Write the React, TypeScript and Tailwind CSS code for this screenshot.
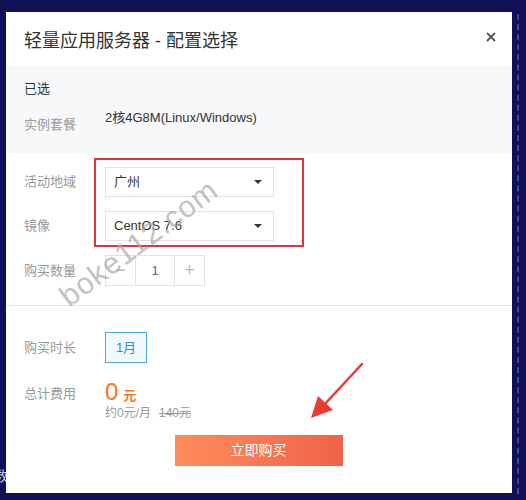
import React from "react";

const Caret = () => (
  <svg width="8" height="4" viewBox="0 0 8 4" className="block">
    <path d="M0 0 L8 0 L4 4 Z" fill="#333" />
  </svg>
);

export default function App() {
  const font = { fontFamily: '"Liberation Sans", Arial, "Noto Sans CJK SC", sans-serif' };
  return (
    <div
      className="relative w-[526px] h-[500px] overflow-hidden bg-[#110f55] pt-[12px] pl-[6px]"
      style={font}
    >
      {/* right dashed strip */}
      <div className="absolute left-[517px] top-[14px] h-[480px] border-l-2 border-dashed border-[#3a4a9a]" />
      {/* background text peeking at left */}
      <div className="absolute left-[-6px] top-[466px] text-[14px] text-[#c9cce8]">数</div>

      <div className="relative w-[506px] h-[481px] bg-white flex flex-col">
        {/* header */}
        <div className="h-[54px] flex items-center justify-between pl-[18px] pr-[16px] pt-[4px]">
          <div className="text-[18px] text-[#333]">轻量应用服务器 - 配置选择</div>
          <svg width="10" height="10" viewBox="0 0 10 10" className="mt-[-8px]">
            <path d="M1 1 L9 9 M9 1 L1 9" stroke="#555" strokeWidth="1.8" />
          </svg>
        </div>

        {/* selected section */}
        <div className="h-[87px] bg-[#f7f8fa] px-[18px] pt-[14px]">
          <div className="text-[13px] text-[#333] leading-[18px]">已选</div>
          <div className="flex mt-[11px]">
            <div className="w-[81px] text-[13px] text-[#999] leading-[18px] mt-[7px]">实例套餐</div>
            <div className="text-[13px] text-[#333] leading-[18px]">2核4G8M(Linux/Windows)</div>
          </div>
        </div>

        {/* config section */}
        <div className="h-[153px] px-[18px] pt-[14px] border-b border-[#e5e5e5]">
          <div className="flex items-center h-[30px]">
            <div className="w-[81px] text-[13px] text-[#999]">活动地域</div>
            <div className="w-[169px] h-[30px] border border-[#e2e2e2] flex items-center justify-between pl-[8px] pr-[11px] text-[13px] text-[#333]">
              <span>广州</span>
              <Caret />
            </div>
          </div>
          <div className="flex items-center h-[30px] mt-[14px]">
            <div className="w-[81px] text-[13px] text-[#999]">镜像</div>
            <div className="w-[169px] h-[30px] border border-[#e2e2e2] flex items-center justify-between pl-[8px] pr-[11px] text-[13px] text-[#333]">
              <span>CentOS 7.6</span>
              <Caret />
            </div>
          </div>
          <div className="flex items-center h-[31px] mt-[14px]">
            <div className="w-[81px] text-[13px] text-[#999]">购买数量</div>
            <div className="flex h-[31px] border border-[#e2e2e2] text-[#bbb]">
              <div className="w-[30px] flex items-center justify-center border-r border-[#e2e2e2] text-[18px]">−</div>
              <div className="w-[39px] flex items-center justify-center border-r border-[#e2e2e2] text-[13px] text-[#666]">1</div>
              <div className="w-[29px] flex items-center justify-center text-[18px]">+</div>
            </div>
          </div>
        </div>

        {/* purchase section */}
        <div className="flex-1 px-[18px] pt-[26px]">
          <div className="flex items-center h-[31px]">
            <div className="w-[81px] text-[13px] text-[#999]">购买时长</div>
            <div className="w-[42px] h-[31px] border border-[#4ba9ea] bg-[#f1f9ff] flex items-center justify-center text-[13px] text-[#2b8cd6]">
              1月
            </div>
          </div>
          <div className="flex mt-[14px]">
            <div className="w-[81px] text-[13px] text-[#999] pt-[7px]">总计费用</div>
            <div>
              <div className="flex items-baseline text-[#ef7a1f]">
                <span className="text-[24px] leading-[30px]">0</span>
                <span className="text-[13px] font-bold ml-[5px]">元</span>
              </div>
              <div className="text-[12px] text-[#999] leading-[16px] mt-[-2px]">
                约0元/月<span className="ml-[8px] line-through">140元</span>
              </div>
            </div>
          </div>
          <div className="flex justify-center mt-[14px] pr-[1px]">
            <div className="w-[168px] h-[31px] bg-gradient-to-r from-[#ff8c5c] to-[#f0624a] flex items-center justify-center text-[14px] text-white">
              立即购买
            </div>
          </div>
        </div>

        {/* red highlight box */}
        <div className="absolute left-[88px] top-[146px] w-[210px] h-[89px] border-2 border-[#e8323a]" />

        {/* arrow */}
        <svg className="absolute left-[0px] top-[0px]" width="506" height="481" viewBox="0 0 506 481">
          <path d="M356 352 L318 393" stroke="#ea3a32" strokeWidth="2.5" strokeLinecap="round" />
          <path d="M305 406 L312 384 L327 398 Z" fill="#ea3a32" />
        </svg>

        {/* watermark */}
        <div
          className="absolute left-[38px] top-[208px] text-[30px] text-[#a9a9a9] opacity-70 whitespace-nowrap origin-center"
          style={{ transform: "rotate(-37deg)", letterSpacing: "1px" }}
        >
          boke112.com
        </div>
      </div>
    </div>
  );
}
